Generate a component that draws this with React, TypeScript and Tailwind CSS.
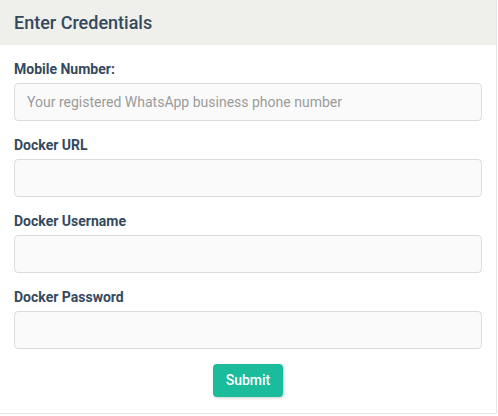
import React from "react";

const fields = [
  { label: "Mobile Number:", placeholder: "Your registered WhatsApp business phone number", type: "text" },
  { label: "Docker URL", placeholder: "", type: "text" },
  { label: "Docker Username", placeholder: "", type: "text" },
  { label: "Docker Password", placeholder: "", type: "password" },
];

export default function App() {
  return (
    <div className="w-[498px] h-[416px] bg-white" style={{ fontFamily: "Roboto, 'Liberation Sans', sans-serif" }}>
      <div className="w-[497px] h-[414px] border-r border-b border-[#e6e6e6] bg-white">
        <div className="h-[45px] bg-[#efefeb] flex items-center px-[14px]">
          <h2 className="text-[18px] font-medium text-[#34495e]">Enter Credentials</h2>
        </div>
        <div className="px-[14px] pt-[14px] pb-[16px] flex flex-col">
          {fields.map((f) => (
            <div key={f.label} className="flex flex-col mb-[14px]">
              <label className="text-[14px] leading-[20px] font-bold text-[#34495e] mb-[4px]">{f.label}</label>
              <input
                type={f.type}
                placeholder={f.placeholder}
                className="h-[38px] w-[468px] rounded-[4px] border border-[#dddddd] bg-[#fafafa] px-[12px] text-[14px] text-[#555] placeholder:text-[#9a9a9a] outline-none"
              />
            </div>
          ))}
          <div className="flex justify-center pt-[1px]">
            <button className="h-[33px] w-[70px] rounded-[4px] bg-[#1abc9c] text-white text-[14px] font-medium shadow-[1px_1px_3px_rgba(0,0,0,0.2)]">
              Submit
            </button>
          </div>
        </div>
      </div>
    </div>
  );
}
